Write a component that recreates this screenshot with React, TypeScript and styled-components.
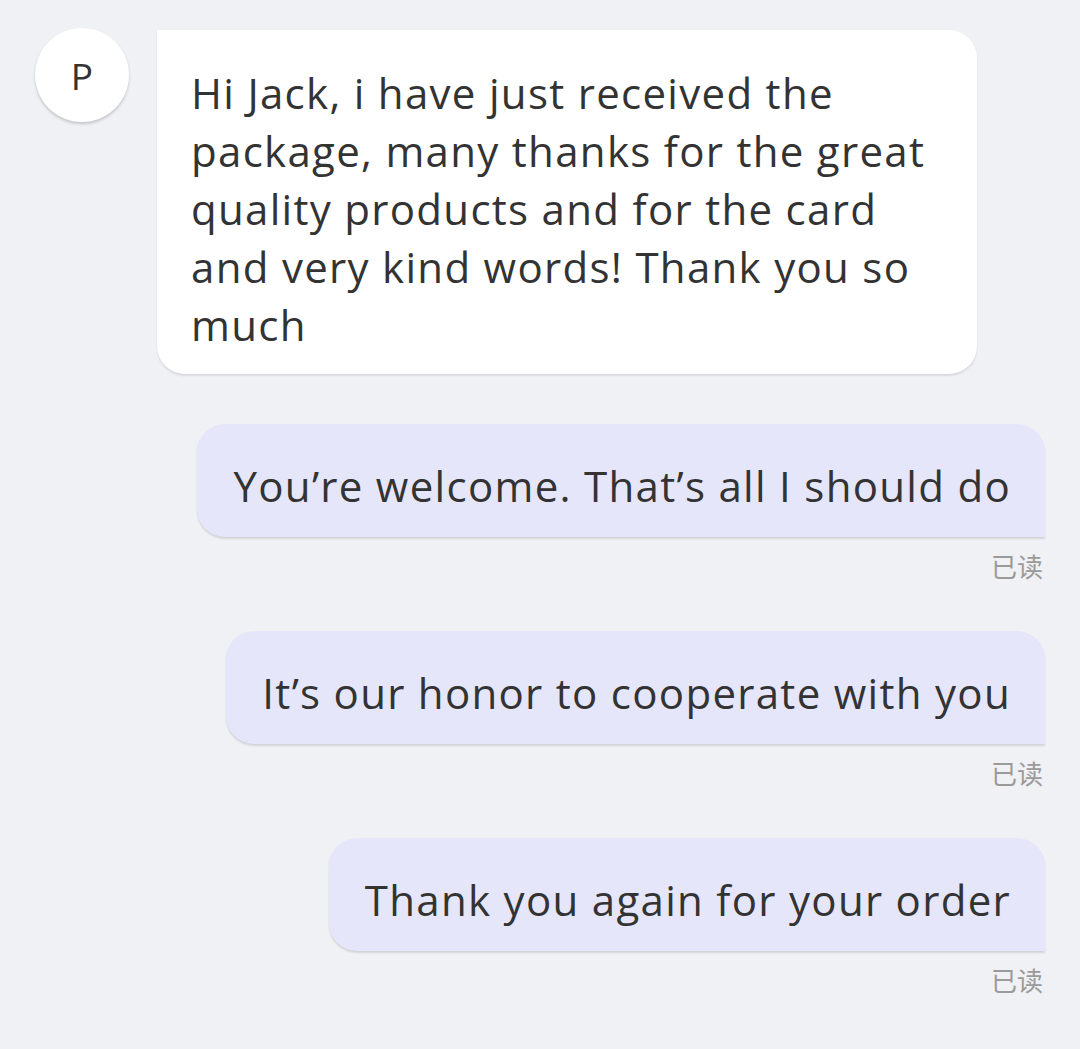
import styled, { createGlobalStyle } from 'styled-components';

const GlobalStyle = createGlobalStyle`
    html, body {
        margin: 0;
        padding: 0;
        background: #f0f1f5;
    }
    body {
        font-family: 'Open Sans', 'Noto Sans', 'Noto Sans CJK SC', sans-serif;
        color: #333;
    }
`;

interface Sent {
    id: number;
    text: string;
}

const sentMessages: Sent[] = [
    { id: 1, text: "You’re welcome. That’s all I should do" },
    { id: 2, text: "It’s our honor to cooperate with you" },
    { id: 3, text: 'Thank you again for your order' },
];

export default function App() {
    return (
        <>
            <GlobalStyle />
            <StyledPage>
                <StyledIncoming>
                    <StyledAvatar>P</StyledAvatar>
                    <StyledIncomingBubble>
                        Hi Jack, i have just received the package, many thanks for the great quality products and for the card and very kind words! Thank you so much
                    </StyledIncomingBubble>
                </StyledIncoming>
                {sentMessages.map((m) => (
                    <StyledOutgoing key={m.id}>
                        <StyledOutgoingBubble>{m.text}</StyledOutgoingBubble>
                        <StyledReadMark>已读</StyledReadMark>
                    </StyledOutgoing>
                ))}
            </StyledPage>
        </>
    );
}

const StyledPage = styled.div`
    min-height: 1049px;
    box-sizing: border-box;
    padding: 28px 35px 40px 35px;
    display: flex;
    flex-direction: column;
    gap: 50px;
`;
const StyledIncoming = styled.div`
    display: flex;
    align-items: flex-start;
    gap: 28px;
`;
const StyledAvatar = styled.div`
    flex: none;
    width: 94px;
    height: 94px;
    border-radius: 50%;
    background: #fff;
    box-shadow: 0 2px 3px rgba(0, 0, 0, 0.18);
    display: flex;
    align-items: center;
    justify-content: center;
    font-size: 37px;
    color: #333;
`;
const StyledIncomingBubble = styled.div`
    margin-top: 2px;
    width: 820px;
    box-sizing: border-box;
    padding: 34px 30px 20px 34px;
    background: #fff;
    border-radius: 0 28px 28px 28px;
    box-shadow: 0 2px 2px rgba(0, 0, 0, 0.1);
    font-size: 42px;
    letter-spacing: 1.3px;
    line-height: 58px;
`;
const StyledOutgoing = styled.div`
    display: flex;
    flex-direction: column;
    align-items: flex-end;
    gap: 14px;
`;
const StyledOutgoingBubble = styled.div`
    height: 113px;
    box-sizing: border-box;
    padding: 10px 34px 0 36px;
    display: flex;
    align-items: center;
    background: #e6e6fa;
    border-radius: 28px 28px 0 28px;
    box-shadow: 0 2px 2px rgba(0, 0, 0, 0.12);
    font-size: 42px;
    letter-spacing: 1.3px;
    white-space: nowrap;
`;
const StyledReadMark = styled.span`
    font-family: 'Noto Sans CJK SC', sans-serif;
    font-size: 26px;
    line-height: 30px;
    color: #9a9a9a;
    margin-right: 2px;
`;
